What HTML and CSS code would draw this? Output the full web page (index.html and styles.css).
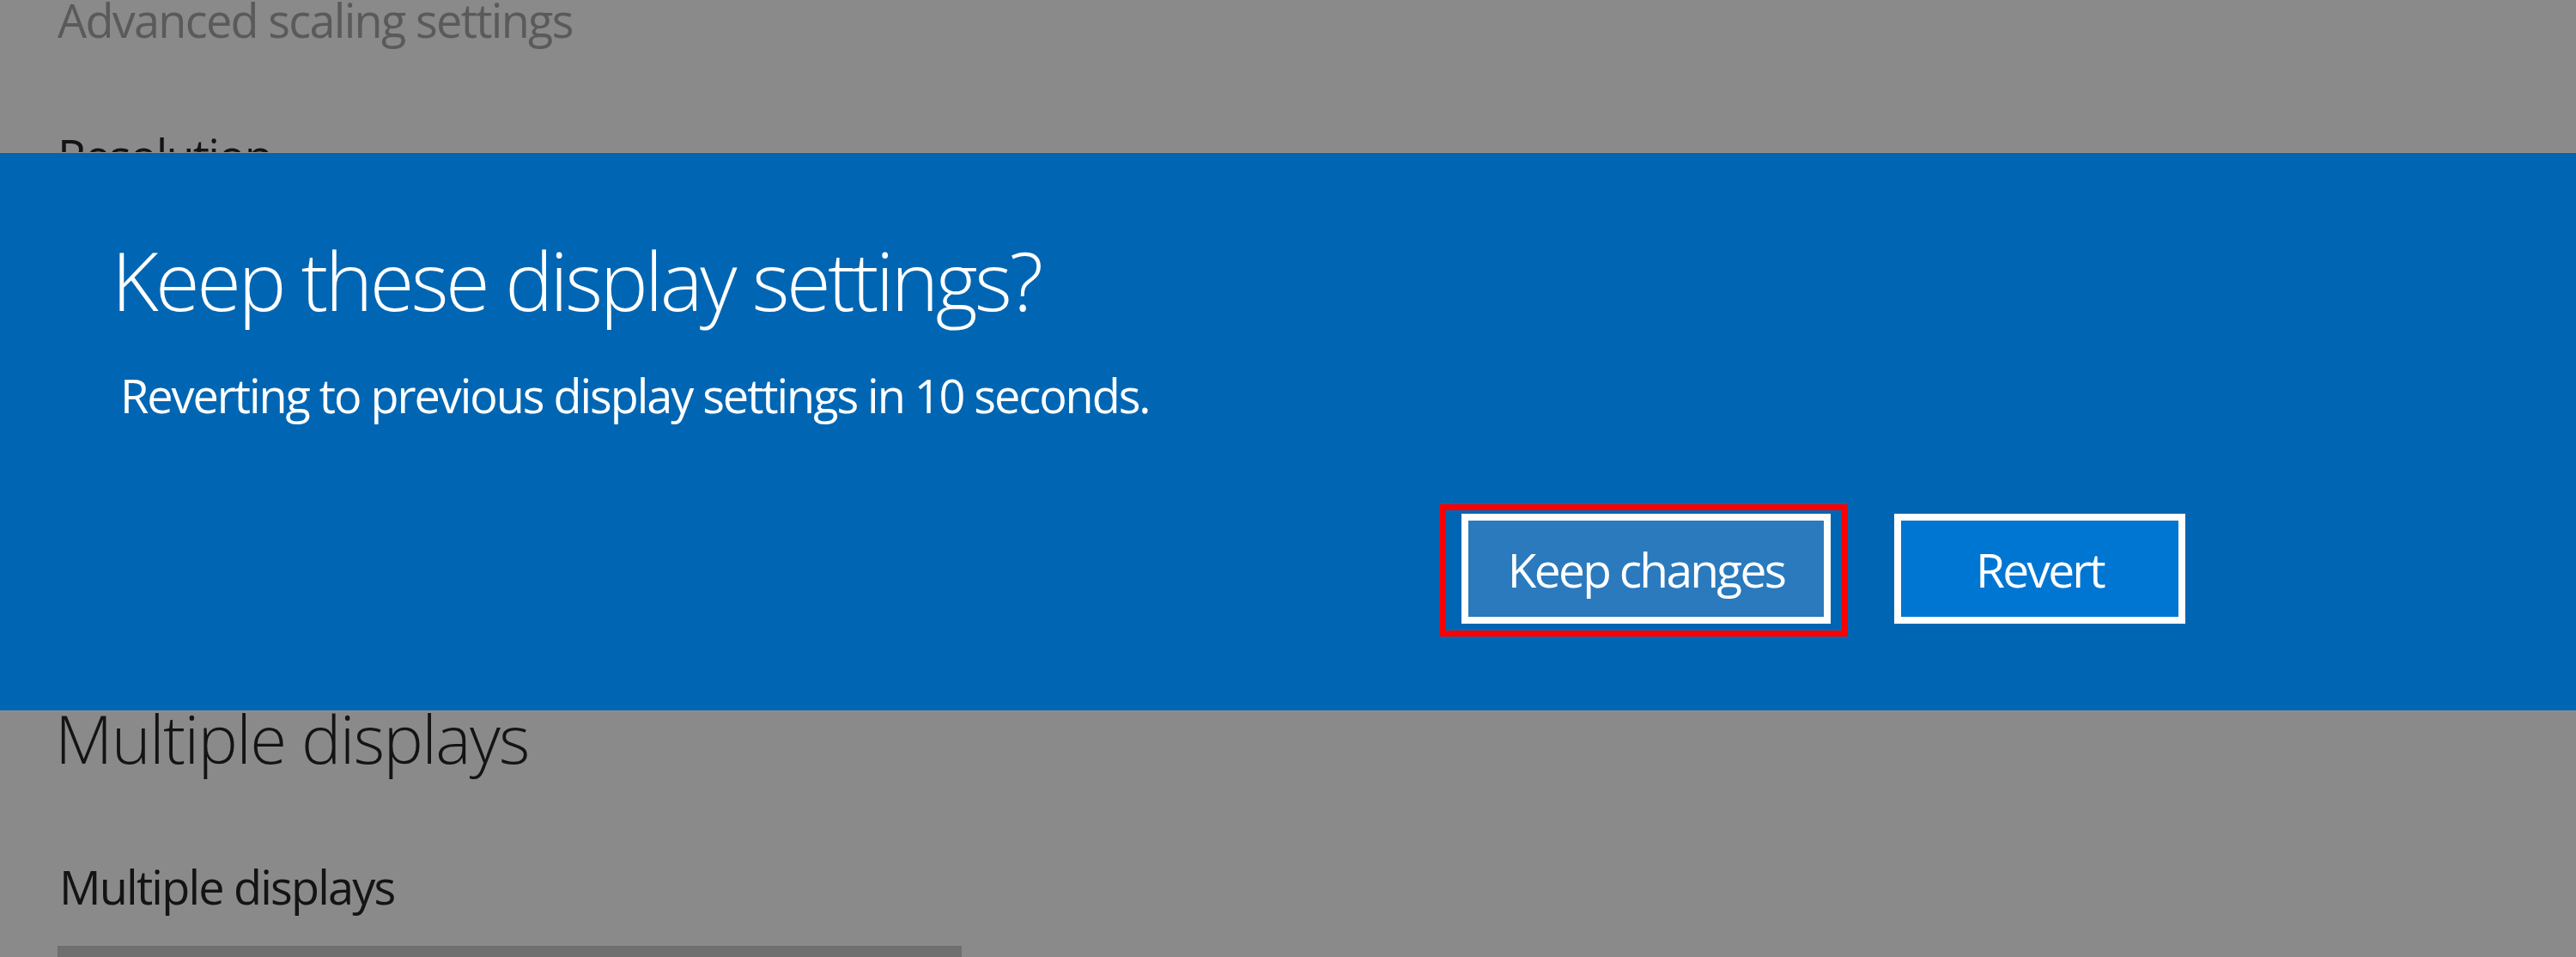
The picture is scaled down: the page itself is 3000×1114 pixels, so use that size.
FILE: index.html
```html
<!DOCTYPE html>
<html lang="en">
<head>
<meta charset="utf-8">
<title>Display settings</title>
<link rel="stylesheet" href="styles.css">
</head>
<body>
<div class="page">
  <div class="settings">
    <div class="link">Advanced scaling settings</div>
    <div class="label resolution">Resolution</div>
    <div class="section-title">Multiple displays</div>
    <div class="label">Multiple displays</div>
    <div class="dropdown"></div>
  </div>
  <div class="band">
    <div class="dialog-title">Keep these display settings?</div>
    <div class="dialog-text">Reverting to previous display settings in 10 seconds.</div>
    <div class="actions">
      <div class="btn-wrap">
        <button class="btn keep">Keep changes</button>
        <span class="highlight"></span>
      </div>
      <button class="btn revert">Revert</button>
    </div>
  </div>
</div>
</body>
</html>
```
FILE: styles.css
```css
html, body {
  margin: 0;
  padding: 0;
}
body {
  width: 3000px;
  height: 1114px;
  overflow: hidden;
  background: #8a8a8a;
  font-family: "Open Sans", "Noto Sans", "DejaVu Sans", sans-serif;
}
.page {
  position: relative;
  width: 3000px;
  height: 1114px;
  overflow: hidden;
}
.settings {
  display: flex;
  flex-direction: column;
  align-items: flex-start;
  padding-left: 67px;
}
.link {
  padding-top: 2px;
  font-size: 54px;
  line-height: 0.8;
  letter-spacing: -1.7px;
  color: #5a5a5a;
}
.label {
  font-size: 54px;
  line-height: 1;
  letter-spacing: -1.8px;
  color: #141414;
}
.resolution {
  margin-top: 109px;
}
.section-title {
  margin-top: 612px;
  margin-left: -3px;
  font-size: 78px;
  line-height: 1;
  font-weight: 300;
  letter-spacing: -1.65px;
  color: #141414;
}
.section-title + .label {
  margin-top: 107px;
  margin-left: 2px;
}
.dropdown {
  margin-top: 42px;
  width: 1053px;
  height: 64px;
  background: #6f6f6f;
}
.band {
  position: absolute;
  left: 0;
  right: 0;
  top: 177px;
  height: 651px;
  box-sizing: border-box;
  background: #0066b3;
  border-top: 1px solid #9e8e88;
  border-bottom: 1px solid #9e8e88;
  padding: 101px 455px 0 130px;
  color: #ffffff;
  display: flex;
  flex-direction: column;
}
.dialog-title {
  font-size: 94px;
  line-height: 1;
  font-weight: 300;
  letter-spacing: -3.5px;
}
.dialog-text {
  margin-top: 60px;
  margin-left: 10px;
  font-size: 54px;
  line-height: 1;
  letter-spacing: -2.05px;
}
.actions {
  margin-top: 111px;
  display: flex;
  justify-content: flex-end;
  gap: 74px;
}
.btn-wrap {
  position: relative;
  display: flex;
}
.btn {
  box-sizing: border-box;
  height: 128px;
  border: 8px solid #ffffff;
  color: #ffffff;
  font-family: inherit;
  font-size: 55px;
  line-height: 1;
  letter-spacing: -2.7px;
  padding: 0;
  display: flex;
  align-items: center;
  justify-content: center;
}
.keep {
  width: 430px;
  background: #2a7abd;
}
.revert {
  width: 339px;
  background: #0076d3;
}
.highlight {
  position: absolute;
  left: -25px;
  top: -11px;
  right: -20px;
  bottom: -15px;
  border: 7px solid #ff0000;
}
```
